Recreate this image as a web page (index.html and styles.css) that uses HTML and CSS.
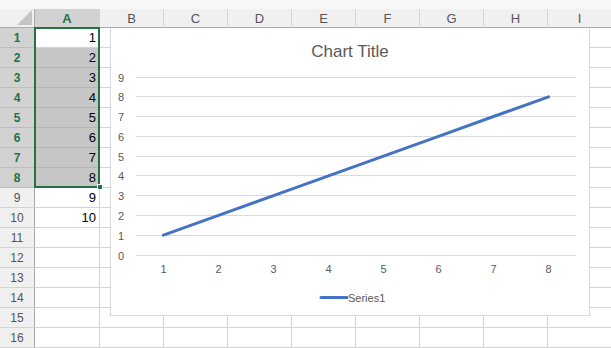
FILE: index.html
```html
<!DOCTYPE html>
<html lang="en">
<head>
  <meta charset="UTF-8">
  <title>Planilha com gráfico</title>
  <link rel="stylesheet" href="styles.css">
</head>
<body>
  <div class="topbar"></div>

  <div class="sheet">
    <!-- cabeçalho das colunas -->
    <div class="row head">
      <div class="rh corner"><span class="tri"></span></div>
      <div class="c a on">A</div>
      <div class="c">B</div><div class="c">C</div><div class="c">D</div><div class="c">E</div>
      <div class="c">F</div><div class="c">G</div><div class="c">H</div><div class="c">I</div>
    </div>

    <div class="row"><div class="rh on">1</div><div class="c a">1</div><div class="c"></div><div class="c"></div><div class="c"></div><div class="c"></div><div class="c"></div><div class="c"></div><div class="c"></div><div class="c"></div></div>
    <div class="row"><div class="rh on">2</div><div class="c a sel">2</div><div class="c"></div><div class="c"></div><div class="c"></div><div class="c"></div><div class="c"></div><div class="c"></div><div class="c"></div><div class="c"></div></div>
    <div class="row"><div class="rh on">3</div><div class="c a sel">3</div><div class="c"></div><div class="c"></div><div class="c"></div><div class="c"></div><div class="c"></div><div class="c"></div><div class="c"></div><div class="c"></div></div>
    <div class="row"><div class="rh on">4</div><div class="c a sel">4</div><div class="c"></div><div class="c"></div><div class="c"></div><div class="c"></div><div class="c"></div><div class="c"></div><div class="c"></div><div class="c"></div></div>
    <div class="row"><div class="rh on">5</div><div class="c a sel">5</div><div class="c"></div><div class="c"></div><div class="c"></div><div class="c"></div><div class="c"></div><div class="c"></div><div class="c"></div><div class="c"></div></div>
    <div class="row"><div class="rh on">6</div><div class="c a sel">6</div><div class="c"></div><div class="c"></div><div class="c"></div><div class="c"></div><div class="c"></div><div class="c"></div><div class="c"></div><div class="c"></div></div>
    <div class="row"><div class="rh on">7</div><div class="c a sel">7</div><div class="c"></div><div class="c"></div><div class="c"></div><div class="c"></div><div class="c"></div><div class="c"></div><div class="c"></div><div class="c"></div></div>
    <div class="row"><div class="rh on">8</div><div class="c a sel">8</div><div class="c"></div><div class="c"></div><div class="c"></div><div class="c"></div><div class="c"></div><div class="c"></div><div class="c"></div><div class="c"></div></div>
    <div class="row"><div class="rh">9</div><div class="c a">9</div><div class="c"></div><div class="c"></div><div class="c"></div><div class="c"></div><div class="c"></div><div class="c"></div><div class="c"></div><div class="c"></div></div>
    <div class="row"><div class="rh">10</div><div class="c a">10</div><div class="c"></div><div class="c"></div><div class="c"></div><div class="c"></div><div class="c"></div><div class="c"></div><div class="c"></div><div class="c"></div></div>
    <div class="row"><div class="rh">11</div><div class="c a"></div><div class="c"></div><div class="c"></div><div class="c"></div><div class="c"></div><div class="c"></div><div class="c"></div><div class="c"></div><div class="c"></div></div>
    <div class="row"><div class="rh">12</div><div class="c a"></div><div class="c"></div><div class="c"></div><div class="c"></div><div class="c"></div><div class="c"></div><div class="c"></div><div class="c"></div><div class="c"></div></div>
    <div class="row"><div class="rh">13</div><div class="c a"></div><div class="c"></div><div class="c"></div><div class="c"></div><div class="c"></div><div class="c"></div><div class="c"></div><div class="c"></div><div class="c"></div></div>
    <div class="row"><div class="rh">14</div><div class="c a"></div><div class="c"></div><div class="c"></div><div class="c"></div><div class="c"></div><div class="c"></div><div class="c"></div><div class="c"></div><div class="c"></div></div>
    <div class="row"><div class="rh">15</div><div class="c a"></div><div class="c"></div><div class="c"></div><div class="c"></div><div class="c"></div><div class="c"></div><div class="c"></div><div class="c"></div><div class="c"></div></div>
    <div class="row"><div class="rh">16</div><div class="c a"></div><div class="c"></div><div class="c"></div><div class="c"></div><div class="c"></div><div class="c"></div><div class="c"></div><div class="c"></div><div class="c"></div></div>

    <!-- seleção A1:A8 -->
    <div class="selecao"><span class="alca"></span></div>

    <!-- gráfico flutuante -->
    <div class="grafico">
      <div class="titulo">Chart Title</div>
      <svg class="plot" width="478" height="252" viewBox="0 0 478 252">
        <g class="grade">
          <line x1="25" y1="193.5" x2="465" y2="193.5"/>
          <line x1="25" y1="173.5" x2="465" y2="173.5"/>
          <line x1="25" y1="153.5" x2="465" y2="153.5"/>
          <line x1="25" y1="133.5" x2="465" y2="133.5"/>
          <line x1="25" y1="113.5" x2="465" y2="113.5"/>
          <line x1="25" y1="94.5" x2="465" y2="94.5"/>
          <line x1="25" y1="74.5" x2="465" y2="74.5"/>
          <line x1="25" y1="54.5" x2="465" y2="54.5"/>
          <line x1="25" y1="34.5" x2="465" y2="34.5"/>
          <line x1="25" y1="15.5" x2="465" y2="15.5"/>
        </g>
        <g class="eixo-y">
          <text x="13" y="193.5">0</text>
          <text x="13" y="173.5">1</text>
          <text x="13" y="153.5">2</text>
          <text x="13" y="133.5">3</text>
          <text x="13" y="113.5">4</text>
          <text x="13" y="94.5">5</text>
          <text x="13" y="74.5">6</text>
          <text x="13" y="54.5">7</text>
          <text x="13" y="34.5">8</text>
          <text x="13" y="15.5">9</text>
        </g>
        <g class="eixo-x">
          <text x="52.5" y="207">1</text>
          <text x="107.5" y="207">2</text>
          <text x="162.5" y="207">3</text>
          <text x="217.5" y="207">4</text>
          <text x="272.5" y="207">5</text>
          <text x="327.5" y="207">6</text>
          <text x="382.5" y="207">7</text>
          <text x="437.5" y="207">8</text>
        </g>
        <polyline class="serie" points="52.5,173.2 107.5,153.4 162.5,133.7 217.5,113.9 272.5,94.1 327.5,74.3 382.5,54.5 437.5,34.8"/>
        <line class="serie" x1="210" y1="235.5" x2="236" y2="235.5"/>
        <text class="legenda" x="237" y="235.5">Series1</text>
      </svg>
    </div>
  </div>
</body>
</html>
```

FILE: styles.css
```css
* {
  margin: 0;
  padding: 0;
  box-sizing: border-box;
}

body {
  font-family: 'Liberation Sans', Arial, sans-serif;
  background-color: white;
  width: 611px;
  height: 348px;
  overflow: hidden;
}

.topbar {
  height: 9px;
  background-color: #f7f7f7;
}

.sheet {
  position: relative;
  width: 612px;
}

.row {
  display: flex;
  height: 20px;
}

.row.head {
  height: 19px;
  background-color: #f0f0f0;
}

.rh {
  width: 35px;
  flex: none;
  background-color: #f0f0f0;
  border-right: 1px solid #ababab;
  border-bottom: 1px solid #d4d4d4;
  color: #555;
  font-size: 12px;
  display: flex;
  align-items: center;
  justify-content: center;
}

.rh.on {
  background-color: #d2d2d2;
  color: #217346;
  font-weight: bold;
  border-bottom-color: #bdbdbd;
}

.c {
  width: 64px;
  flex: none;
  border-right: 1px solid #d4d4d4;
  border-bottom: 1px solid #d4d4d4;
  font-size: 13px;
  color: black;
  display: flex;
  align-items: center;
  justify-content: flex-end;
  padding-right: 3px;
}

.c.a {
  width: 65px;
}

.c.sel {
  background-color: #c6c6c6;
  border-bottom-color: #b4b4b4;
}

/* cabeçalho das colunas */
.head .c {
  justify-content: center;
  padding-right: 0;
  color: #555;
  font-size: 13px;
  border-bottom: 1px solid #ababab;
  border-right-color: #d4d4d4;
}

.head .c.on {
  background-color: #d2d2d2;
  color: #217346;
  font-weight: bold;
}

.head .rh.corner {
  border-bottom: 1px solid #ababab;
  align-items: flex-end;
  justify-content: flex-end;
  padding: 0 2px 2px 0;
}

.tri {
  width: 15px;
  height: 15px;
  background-color: #c4c4c4;
  clip-path: polygon(100% 0, 100% 100%, 0 100%);
}

.selecao {
  position: absolute;
  left: 34px;
  top: 18px;
  width: 66px;
  height: 161px;
  border: 2px solid #217346;
  pointer-events: none;
}

.alca {
  position: absolute;
  right: -5px;
  bottom: -4px;
  width: 6px;
  height: 6px;
  background-color: #217346;
  border: 1px solid white;
}

.grafico {
  position: absolute;
  left: 110px;
  top: 19px;
  width: 480px;
  height: 288px;
  background-color: white;
  border: 1px solid #d9d9d9;
  border-top: none;
  display: flex;
  flex-direction: column;
}

.titulo {
  text-align: center;
  font-size: 17px;
  color: #595959;
  line-height: 24px;
  padding-top: 12px;
  height: 34px;
}

.plot {
  display: block;
}

.grade line {
  stroke: #d9d9d9;
  stroke-width: 1;
}

.plot text {
  font-family: 'Liberation Sans', Arial, sans-serif;
  font-size: 11px;
  fill: #595959;
  dominant-baseline: central;
}

.eixo-y text {
  text-anchor: end;
}

.eixo-x text {
  text-anchor: middle;
}

.serie {
  fill: none;
  stroke: #4472c4;
  stroke-width: 3;
  stroke-linecap: round;
}
```
